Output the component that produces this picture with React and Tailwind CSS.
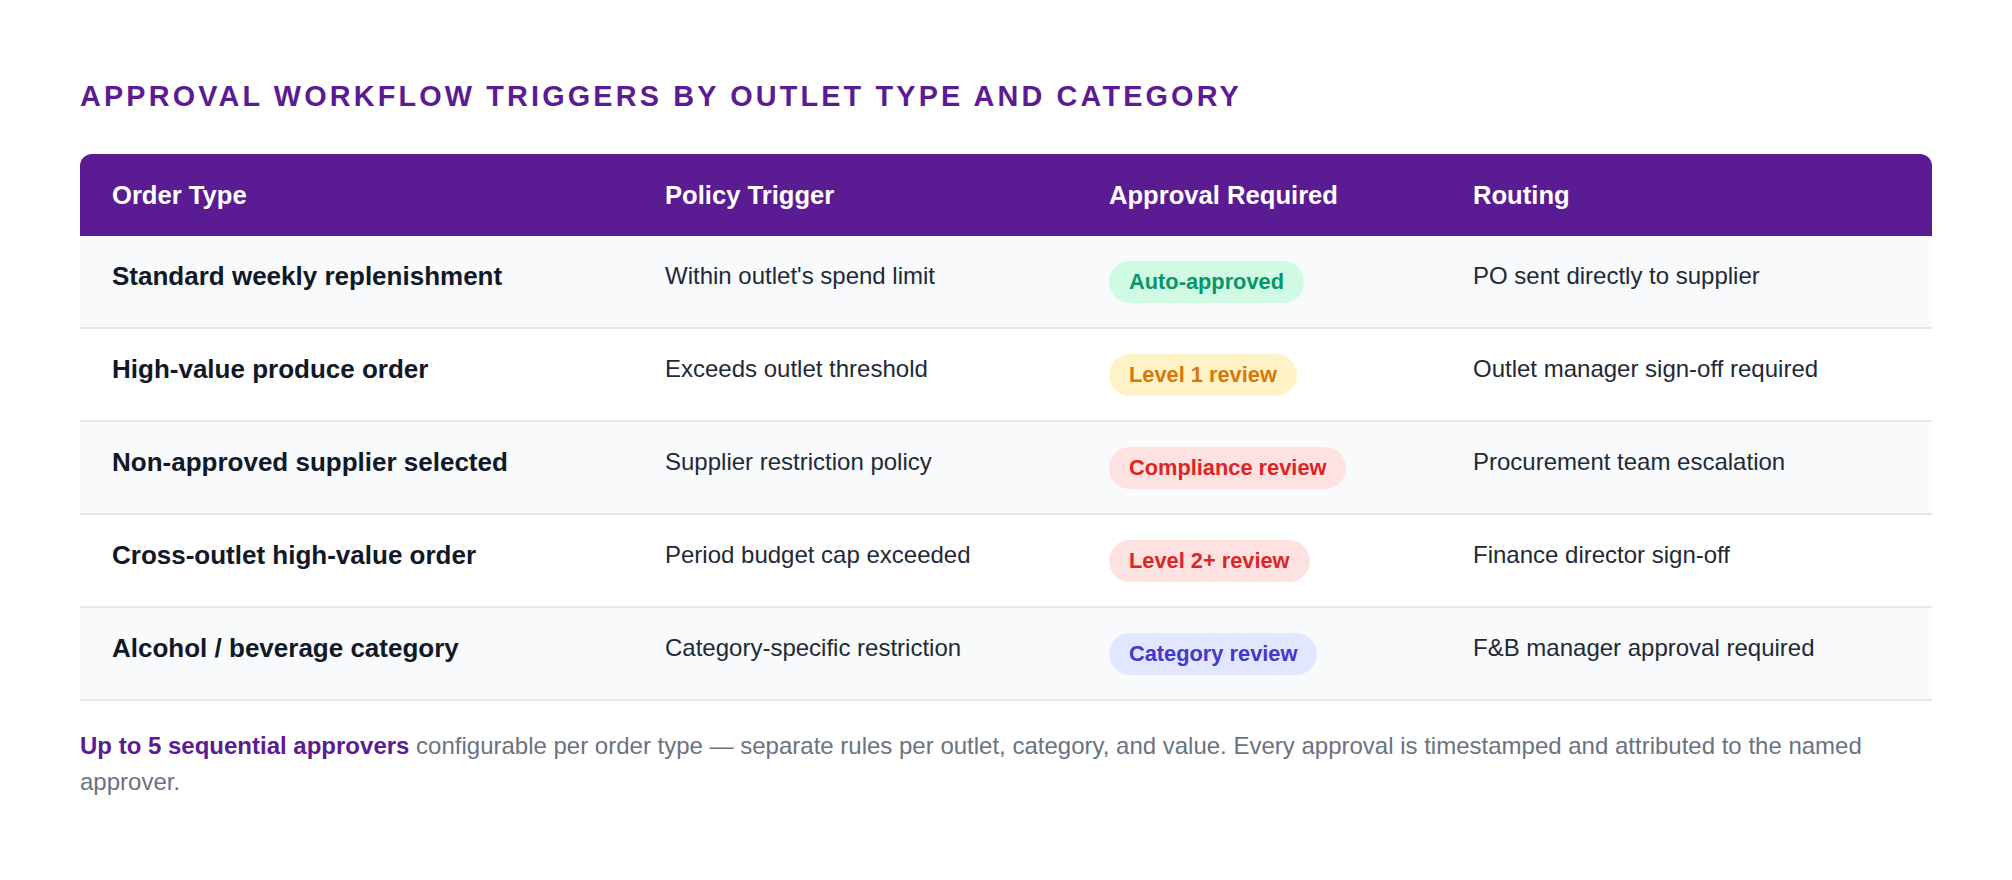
const rows = [
  {
    type: "Standard weekly replenishment",
    trigger: "Within outlet's spend limit",
    badge: "Auto-approved",
    tone: "bg-[#d1fae5] text-[#059669]",
    routing: "PO sent directly to supplier",
  },
  {
    type: "High-value produce order",
    trigger: "Exceeds outlet threshold",
    badge: "Level 1 review",
    tone: "bg-[#fef3c7] text-[#d97706]",
    routing: "Outlet manager sign-off required",
  },
  {
    type: "Non-approved supplier selected",
    trigger: "Supplier restriction policy",
    badge: "Compliance review",
    tone: "bg-[#fee2e2] text-[#dc2626]",
    routing: "Procurement team escalation",
  },
  {
    type: "Cross-outlet high-value order",
    trigger: "Period budget cap exceeded",
    badge: "Level 2+ review",
    tone: "bg-[#fee2e2] text-[#dc2626]",
    routing: "Finance director sign-off",
  },
  {
    type: "Alcohol / beverage category",
    trigger: "Category-specific restriction",
    badge: "Category review",
    tone: "bg-[#e0e7ff] text-[#4338ca]",
    routing: "F&B manager approval required",
  },
];

const cols = "grid grid-cols-[553px_444px_364px_1fr]";

export default function App() {
  return (
    <div className="min-h-screen bg-white px-[80px] pt-[79px] pb-16 font-['Liberation_Sans',Arial,sans-serif]">
      <h2 className="text-[28.8px] leading-[34px] font-bold tracking-[0.11em] uppercase text-[#5b1b93] mb-[41px]">
        Approval Workflow Triggers by Outlet Type and Category
      </h2>

      <div>
        <div className={`${cols} h-[82px] items-center bg-[#5b1b93] rounded-t-[12px] text-white text-[25.6px] font-bold`}>
          <div className="px-[32px]">Order Type</div>
          <div className="px-[32px]">Policy Trigger</div>
          <div className="px-[32px]">Approval Required</div>
          <div className="px-[32px]">Routing</div>
        </div>

        {rows.map((r, i) => (
          <div
            key={r.type}
            className={`${cols} items-start border-b-2 border-[#e5e7eb] ${i % 2 === 0 ? "bg-[#f8fafc]" : "bg-white"}`}
          >
            <div className="px-[32px] pt-[25px] pb-[24px] text-[26px] leading-[30px] font-bold text-[#111827]">
              {r.type}
            </div>
            <div className="px-[32px] pt-[26px] pb-[24px] text-[24px] leading-[28px] text-[#1f2937]">
              {r.trigger}
            </div>
            <div className="px-[32px] pt-[25px] pb-[24px]">
              <span className={`inline-flex items-center h-[42px] px-[20px] rounded-full text-[21.8px] font-bold ${r.tone}`}>
                {r.badge}
              </span>
            </div>
            <div className="px-[32px] pt-[26px] pb-[24px] text-[24px] leading-[28px] text-[#1f2937]">
              {r.routing}
            </div>
          </div>
        ))}
      </div>

      <p className="mt-[27px] text-[24px] leading-[36px] text-[#6b7280]">
        <span className="font-bold text-[#5b1b93]">Up to 5 sequential approvers</span> configurable per order
        type — separate rules per outlet, category, and value. Every approval is timestamped and attributed to
        the named approver.
      </p>
    </div>
  );
}
